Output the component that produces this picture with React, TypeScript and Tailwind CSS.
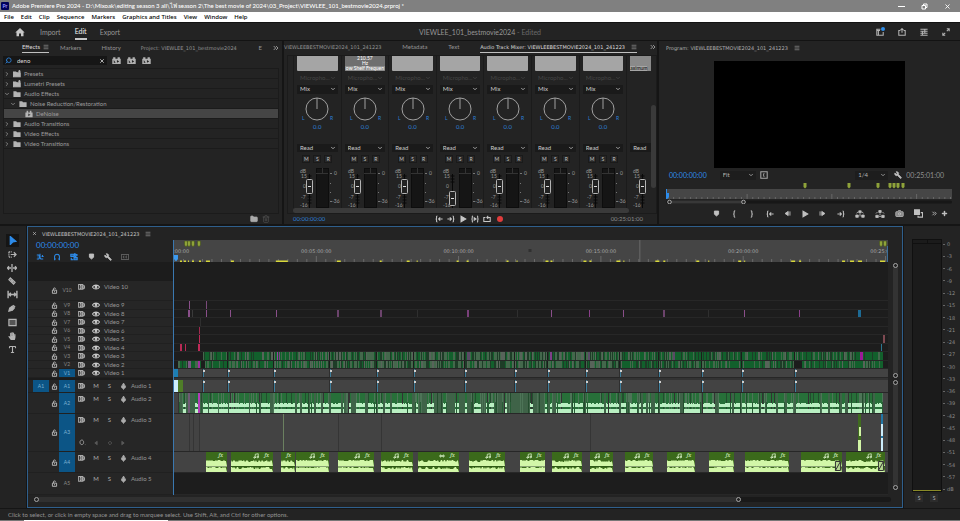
import type { ReactNode } from 'react';
import { Mic, Music, ChevronDown, ChevronRight, ChevronsRight, Menu, Search, X, Wrench, Folder, Trash2, Camera, Plus, Type } from 'lucide-react';
import { FaHandPaper } from 'react-icons/fa';

const SEQUENCE = 'VIEWLEEBESTMOVIE2024_101_241223';

// Timeline canvas units: one unit is 2.1 seconds of the sequence
const CANVAS = 715;

function random(seed: number) {
  let s = seed;
  return () => {
    s = (s * 16807) % 2147483647;
    return s / 2147483647;
  };
}

/* ---------- icons ---------- */

const glyphs: Record<string, ReactNode> = {
  goIn: <path d="M3 1.2c-1.4 0-1 1.4-1 2.4S1.6 5 .8 5c.8 0 1.2.4 1.2 1.4s-.4 2.4 1 2.4M9.5 5H4.5M6.5 3 4.5 5l2 2" />,
  goOut: <path d="M7 1.2c1.4 0 1 1.4 1 2.4S8.400 5 9.200 5C8.400 5 8 5.400 8 6.400s.4 2.400-1 2.400M.5 5h5M3.500 3l2 2-2 2" />,
  play: <path d="M2.500 1.500v7l6-3.500z" fill="currentColor" />,
  playInOut: <path d="M2.500 1.200c-1.200 0-.9 1.400-.9 2.400S1.200 5 .5 5c.7 0 1.100.4 1.100 1.400s-.3 2.400.9 2.400M7.500 1.200c1.200 0 .9 1.400.9 2.400S8.800 5 9.500 5c-.7 0-1.100.4-1.100 1.400s.3 2.400-.9 2.400M4 3.500v3L6.300 5z" />,
  loop: <path d="M3 3H1v5h8V3H5M6.500 1.200 4.800 3l1.700 1.700" />,
  braceOpen: <path d="M6.500 1C4.700 1 5.200 2.600 5.200 3.600S4.700 5 4 5c.7 0 1.200.4 1.200 1.400S4.700 9 6.500 9" />,
  braceClose: <path d="M3.500 1c1.800 0 1.300 1.600 1.300 2.600S5.300 5 6 5c-.7 0-1.200.4-1.200 1.400S5.300 9 3.500 9" />,
  marker: <path d="M2 1.500h6v4.500L5 8.500 2 6z" fill="currentColor" />,
  stepBack: <path d="M6 2v6L1.500 5zM8.500 2v6" fill="currentColor" />,
  stepForward: <path d="M4 2v6l4.500-3zM1.500 2v6" fill="currentColor" />,
  lift: <path d="M.8 6h2.500v2.300H.8zM6.700 6h2.500v2.300H6.700zM3.800 1.800h2.400v2H3.800zM5 4.500v3M1.500 4.200 3 3M8.500 4.200 7 3" fill="currentColor" strokeWidth=".8" />,
  extract: <path d="M.8 6.300h2.500v2.200H.8zM6.700 6.300h2.500v2.200H6.700zM3.800 1.500h2.400v2H3.800zM4 7.400h2M5 4.300v2M1 4.500 2.500 3M9 4.500 7.500 3" fill="currentColor" strokeWidth=".8" />,
  compare: <><path d="M.5 1h5.500v5H.5z" fill="currentColor" /><path d="M7.500 4h2v5h-5V7.500" /></>,
  lock: <path d="M2 4.500h6V9H2zM3.500 4.500V2.500c0-1.500 3-1.500 3 0M5 6v1.500" />,
  sync: <path d="M.8 1.800h5v6h-5zM2.500 3.300h2M2.500 5h6M2.500 6.500h2M6 2.500c3 0 3 5 0 5" />,
  eye: <path d="M.5 5C2.500 1.500 7.500 1.500 9.500 5 7.500 8.500 2.500 8.500.5 5zM5 3.900a1.100 1.100 0 1 0 0 2.200 1.100 1.100 0 0 0 0-2.200z" />,
  keyframe: <path d="M4 1.500C.5 1.500.5 8 4 8s3.500-6.500 0-6.500zM8.500 8h.5" />,
  prevKey: <path d="M7 2v6L3 5z" fill="currentColor" />,
  nextKey: <path d="M3 2v6l4-3z" fill="currentColor" />,
  diamond: <path d="M5 2 8 5 5 8 2 5z" />,
  select: <path d="M2.500.5 9 6 5.500 6.500 2.500 9.500z" fill="currentColor" />,
  trackSelect: <><path d="M1 2h4M1 8h4M1 2v6" strokeDasharray="1.200 .8" /><path d="M3 5h6M6.500 2.500 9 5 6.500 7.500" /></>,
  ripple: <path d="M5 1v8M.5 5H4M6 5h3.500M2 3.300.5 5 2 6.700M8 3.300 9.500 5 8 6.700" />,
  razor: <path d="M3 1 9 6.500 7 9 1 3.500zM4 4l2 2" fill="currentColor" fillOpacity=".7" />,
  slip: <path d="M1 1.500v7M9 1.500v7M2 5h6M3.500 3.500 2 5l1.500 1.500M6.500 3.500 8 5 6.500 6.500" />,
  pen: <path d="M1 9l1-4 3.500-2.500L8 5 5.500 8zM6.500 1.500 9 4" fill="currentColor" />,
  rect: <path d="M1 1.500h8v7H1z" fill="currentColor" fillOpacity=".35" />,
  nest: <path d="M1 2.500h2.500L6 7.500h3M1 7.500h2.500l2-4M5 1v2M8 2.500v2M2.500 4.500v1M7 4.500h2.500" />,
  magnet: <path d="M2 9V4.500c0-4 6-4 6 0V9M1.500 7.500h2M6.500 7.500h2" />,
  linked: <path d="M1 1.500h4v3H1zM5 5.500h4v3H5zM6 1l3 1.500L6.500 5zM1.500 6v2.500H4" fill="currentColor" fillOpacity=".6" />,
  captions: <path d="M.5 2h9v6h-9zM4.200 4C2.400 3.400 2.400 6.600 4.200 6M7.500 4C5.700 3.400 5.700 6.600 7.500 6" />,
  workspace: <path d="M9 5v4H1V1.500h4.500M1 3h4M3 3v6" />,
  share: <path d="M3 3H1v6h8V3H7M5 6V.8M3.200 2.400 5 .8l1.800 1.600" />,
  quick: <path d="M.5 1.500h9M.5 4h9M.5 6.500h9M.5 9h9M6 1v6M3 3.500v5" />,
  fullscreen: <path d="M6 1h3v3M9 1 6 4M4 9H1V6M1 9l3-3" />,
  home: <path d="M.3 5.500 5 1l4.700 4.500H8.500V9.300H6V6.500H4v2.800H1.500V5.500z" fill="currentColor" stroke="none" />,
  preset: <path d="M.5 2.500h3l1 1h4.500v5H.5zM8 0v3M6.500 1.500h3" fill="currentColor" />,
  folder: <path d="M.5 1.500h3.500l1 1.200h4.500v6h-9z" fill="currentColor" stroke="none" />,
  accel: <path fillRule="evenodd" d="M.3 3h1V1.500h2.500V3h2.400V1.500h2.500V3h1v6H.3zM2 4.500v3h2M5.500 4.500v3l2.500-1.500z" fill="currentColor" stroke="none" />,
  effect: <path fillRule="evenodd" d="M.5 3H2V1h2v2h2V1h2v2h1.500v6h-9zM4 4.500v3.200L7 6z" fill="currentColor" stroke="none" />,
  square: <path d="M1 1h8v8H1zM5.500 3C4.200 3 4.800 5 4 5c.8 0 .2 2 1.500 2" />,
  wave: <path d="M1 4v2M2.600 2.500v5M4.200 3.500v3M5.800 3.500v3M7.400 2.500v5M9 4v2" />,
};

function Icon({ name, className = 'size-2' }: { name: string; className?: string }) {
  return (
    <svg viewBox="0 0 10 10" className={`shrink-0 ${className}`} fill="none" stroke="currentColor" strokeWidth="1.3" aria-hidden="true">
      {glyphs[name]}
    </svg>
  );
}

function IconButton({ name, label, className = '', icon }: { name: string; label: string; className?: string; icon?: string }) {
  return (
    <button aria-label={label} className={`flex shrink-0 items-center justify-center ${className}`}>
      <Icon name={name} className={icon} />
    </button>
  );
}

function PanelMenu() {
  return (
    <button aria-label="Panel menu" className="text-[#8a8a8a]">
      <Menu className="size-1.5" strokeWidth={3} />
    </button>
  );
}

/* ---------- window chrome ---------- */

function TitleBar() {
  return (
    <div className="flex h-3 items-center bg-[#808080] text-[6px] font-medium text-white">
      <span className="ml-px flex size-2 items-center justify-center rounded-[1px] bg-[#00005b] text-[5px] font-bold text-[#9999ff]">Pr</span>
      <span className="ml-[3px] whitespace-nowrap">
        Adobe Premiere Pro 2024 - D:\Mixoak\editing season 3 all\ไฟ season 2\The best movie of 2024\03_Project\VIEWLEE_101_bestmovie2024.prproj *
      </span>
      <div className="ml-auto flex gap-4 pr-[9px]">
        <button aria-label="Minimize" className="flex size-[7px] items-center"><span className="h-px w-full bg-white" /></button>
        <button aria-label="Restore" className="size-[7px]">
          <svg viewBox="0 0 7 7" className="size-full" fill="none" stroke="white"><path d="M1 2.500h3.500V6H1zM2.500 2.500V1H6v3.500H4.500" /></svg>
        </button>
        <button aria-label="Close"><X className="size-[7px]" strokeWidth={3} /></button>
      </div>
    </div>
  );
}

const menus = ['File', 'Edit', 'Clip', 'Sequence', 'Markers', 'Graphics and Titles', 'View', 'Window', 'Help'];

function MenuBar() {
  return (
    <nav className="flex h-[10px] items-center gap-[7px] bg-white pl-1 font-['Noto_Sans',sans-serif] text-[6px] font-medium text-black">
      {menus.map((m) => <button key={m}>{m}</button>)}
    </nav>
  );
}

function Header() {
  return (
    <header className="grid h-[19px] grid-cols-3 items-center border-y border-[#131313] bg-[#232323] text-[7px] text-[#969696]">
      <div className="flex h-full items-center pl-[15px]">
        <IconButton name="home" label="Home" className="text-[#c8c8c8]" icon="size-[10px]" />
        <button className="ml-[15px]">Import</button>
        <button className="ml-[14px] h-full border-b-2 border-[#c8c8c8] text-[#f0f0f0]">Edit</button>
        <button className="ml-[13px]">Export</button>
      </div>
      <div className="whitespace-nowrap text-center">
        VIEWLEE_101_bestmovie2024 <span className="text-[#6a6a6a]">- Edited</span>
      </div>
      <div className="flex justify-end gap-[14px] pr-[10px] text-[#b4b4b4]">
        <span className="relative flex">
          <IconButton name="workspace" label="Workspaces" />
          <span className="absolute -right-px -top-px size-1 rounded-full bg-[#2f8eea]" />
        </span>
        <IconButton name="share" label="Quick export" />
        <IconButton name="quick" label="Progress" />
        <IconButton name="fullscreen" label="Full screen" />
      </div>
    </header>
  );
}

/* ---------- effects panel ---------- */

const effects = [
  { name: 'Presets', icon: 'preset', depth: 'pl-0', open: false },
  { name: 'Lumetri Presets', icon: 'preset', depth: 'pl-0', open: false },
  { name: 'Audio Effects', icon: 'folder', depth: 'pl-0', open: true },
  { name: 'Noise Reduction/Restoration', icon: 'folder', depth: 'pl-1.5', open: true },
  { name: 'DeNoise', icon: 'effect', depth: 'pl-3', open: null },
  { name: 'Audio Transitions', icon: 'folder', depth: 'pl-0', open: false },
  { name: 'Video Effects', icon: 'folder', depth: 'pl-0', open: false },
  { name: 'Video Transitions', icon: 'folder', depth: 'pl-0', open: false },
];

function EffectsPanel() {
  return (
    <section className="flex w-[282px] shrink-0 flex-col bg-[#232323] pb-[1px]">
      <div className="flex h-[13px] items-center whitespace-nowrap pl-[22px] text-[#949494]">
        <div className="flex h-[11px] w-[27px] items-center justify-between border-b border-[#c0c0c0]">
          <button className="text-[#dcdcdc]">Effects</button>
          <PanelMenu />
        </div>
        <button className="ml-[11px]">Markers</button>
        <button className="ml-[20px]">History</button>
        <button className="ml-[20px] font-['DejaVu_Sans',sans-serif] text-[5px]">Project: VIEWLEE_101_bestmovie2024</button>
        <span className="ml-auto">E</span>
        <button aria-label="More tabs" className="ml-2.5 mr-0.5"><ChevronsRight className="size-2" strokeWidth={3} /></button>
      </div>
      <div className="mt-px flex h-[11px] items-center pl-[3px]">
        <label className="flex h-[9px] w-[104px] items-center bg-[#161616] px-0.5">
          <Search className="size-[7px] -scale-x-100 text-[#2d7fd3]" strokeWidth={3} />
          <input aria-label="Search effects" defaultValue="deno" className="ml-[5px] min-w-0 flex-1 bg-transparent text-[#dcdcdc] outline-none" />
          <button aria-label="Clear search"><X className="size-1.5 text-[#ddd]" strokeWidth={3} /></button>
        </label>
        <div className="ml-[5px] flex gap-1.5 text-[#b0b0b0]">
          <IconButton name="accel" label="Accelerated effects" icon="size-[9px]" />
          <IconButton name="accel" label="32-bit effects" icon="size-[9px]" />
          <IconButton name="accel" label="YUV effects" icon="size-[9px]" />
        </div>
      </div>
      <div className="mx-[3px] mt-[2px] flex-1 border border-[#1b1b1b]">
        {effects.map((e) => (
          <div key={e.name} className={`h-[10px] border-b border-[#1b1b1b] ${e.open === null ? 'bg-[#454545]' : ''}`}>
            <button className={`flex h-full items-center text-[#9c9c9c] ${e.depth}`}>
              <span className="flex w-[9px] items-center">
                {e.open === true && <ChevronDown className="size-1.5" strokeWidth={3} />}
                {e.open === false && <ChevronRight className="size-1.5" strokeWidth={3} />}
              </span>
              <Icon name={e.icon} className="size-[8px] text-[#b4b4b4]" />
              <span className="ml-[3px]">{e.name}</span>
            </button>
          </div>
        ))}
      </div>
      <div className="flex h-[9px] items-center justify-end gap-1 pr-3">
        <button aria-label="New bin"><Folder className="size-2 fill-current text-[#aaa]" /></button>
        <button aria-label="Delete"><Trash2 className="size-2 text-[#555]" /></button>
      </div>
    </section>
  );
}

/* ---------- audio track mixer ---------- */

function MiniSelect({ label, value, className = '' }: { label: string; value: string; className?: string }) {
  return (
    <div className={`relative flex items-center ${className}`}>
      <select aria-label={label} className="h-full w-full appearance-none pl-[3px] outline-none">
        <option>{value}</option>
      </select>
      <ChevronDown className="pointer-events-none absolute right-0.5 size-[6px]" strokeWidth={3} />
    </div>
  );
}

const strips = [
  { low: false, plot: 'plain' },
  { low: false, plot: 'shelf' },
  { low: false, plot: 'plain' },
  { low: true, plot: 'plain' },
  { low: false, plot: 'plain' },
  { low: false, plot: 'plain' },
  { low: false, plot: 'plain' },
];

function Fader({ low = false }: { low?: boolean }) {
  return (
    <>
      <text x="3" y="6">dB</text>
      <text x="4" y="11">15</text>
      <text x="6" y="21">0</text>
      <text x="4" y="32">-7</text>
      <text x="3" y="40">-16</text>
      <path d="M10.500 9h4M10.500 12h4M10.500 15h4M10.500 27h4M10.500 30h4M10.500 33h4M10.500 36h4M12.500 7v34" stroke="#080808" />
      <rect x="9.500" y={low ? 24.500 : 12.500} width="6" height="14" rx="1" fill="#222" stroke="#b4b4b4" />
      <path d={low ? 'M11 31.500h3' : 'M11 19.500h3'} stroke="#ddd" />
    </>
  );
}

function Strip({ low, plot, index }: { low: boolean; plot: string; index: number }) {
  return (
    <div className="flex w-[13.300%] shrink-0 flex-col border-l border-[#1b1b1b] px-[3px]">
      <div className={`flex h-[15px] flex-col items-center justify-end overflow-hidden rounded-b-[1px] text-[5px] leading-[5px] ${plot === 'plain' ? 'bg-[#a5a5a5]' : 'bg-[#6f6f6f] text-white'}`}>
        {plot === 'shelf' && <><span>210.57</span><span>Hz</span><span className="flex w-full justify-center whitespace-nowrap bg-[#8c8c8c]">ow Shelf Frequen</span></>}
      </div>
      <MiniSelect label={`Input ${index}`} value="Micropho..." className="mt-[3px] h-[9px] text-[#464646]" />
      <MiniSelect label={`Output ${index}`} value="Mix" className="mt-[2px] h-[9px] bg-[#1a1a1a] text-[#cacaca]" />
      <svg viewBox="0 0 40 26" className="mx-auto mt-[3px] h-[26px] w-10 shrink-0" role="img" aria-label="Pan 0.0">
        <circle cx="20" cy="12" r="11" fill="none" stroke="#a0a0a0" />
        <path d="M20 1v11" stroke="#a0a0a0" />
        <text x="5" y="23" fontSize="5" fill="#2d7fd3">L</text>
        <text x="33" y="23" fontSize="5" fill="#2d7fd3">R</text>
      </svg>
      <button className="h-[7px] text-center leading-[7px] text-[#2d7fd3]">0.0</button>
      <MiniSelect label={`Automation ${index}`} value="Read" className="mt-[14px] h-[9px] bg-[#1a1a1a] text-[#cacaca]" />
      <div className="mt-[3px] flex justify-center gap-[3px] text-[5px] text-[#c0c0c0]">
        {['M', 'S', 'R'].map((b) => <button key={b} className="size-2 border border-[#1a1a1a] bg-[#282828] leading-[6px]">{b}</button>)}
      </div>
      <svg viewBox="0 0 40 41" className="mt-[4px] h-[41px] w-10 shrink-0 overflow-visible" fill="#9a9a9a" fontSize="5" aria-hidden="true">
        <Fader low={low} />
        <rect x="19.500" y="1.500" width="12" height="39" fill="#151515" stroke="#0d0d0d" />
        <path d="M19 6.500h12M25.500 1v5" stroke="#333" />
        <path d="M33 6.500h2M33 16.500h1M33 25.500h1M33 34.500h2" stroke="#777" />
        <text x="37" y="8">0</text>
        <text x="35" y="36">-36</text>
      </svg>
    </div>
  );
}

function PartialStrip() {
  return (
    <div className="flex min-w-0 flex-1 flex-col border-l border-[#1b1b1b] pl-[3px]">
      <div className="flex h-[15px] items-end bg-[#8a8a8a] text-[5px] leading-[5px] text-black">
        <span className="bg-[#a5a5a5]">aximum</span>
      </div>
      <div className="mt-[72px] flex h-[9px] items-center bg-[#1a1a1a] pl-[3px] text-[#cacaca]">
        <button>Read</button>
      </div>
      <svg viewBox="0 0 20 41" className="mt-[15px] h-[41px] w-5 shrink-0" fill="#9a9a9a" fontSize="5" aria-hidden="true">
        <Fader />
      </svg>
    </div>
  );
}

function MixerPanel() {
  return (
    <section className="flex min-w-0 flex-1 flex-col bg-[#232323]">
      <div className="flex h-[13px] items-center whitespace-nowrap text-[#949494]">
        <button className="font-['DejaVu_Sans',sans-serif] text-[5px]">{SEQUENCE}</button>
        <button className="ml-auto">Metadata</button>
        <button className="ml-auto">Text</button>
        <div className="ml-auto flex h-[11px] items-center gap-1.5 border-b border-[#c0c0c0]">
          <button className="font-['DejaVu_Sans',sans-serif] text-[5px] text-[#dcdcdc]">Audio Track Mixer: {SEQUENCE}</button>
          <PanelMenu />
        </div>
        <button aria-label="More tabs" className="ml-3"><ChevronsRight className="size-2" strokeWidth={3} /></button>
      </div>
      <div className="ml-[3px] mt-[2px] flex flex-1 border border-[#1b1b1b] pl-[5px]">
        <div className="flex min-w-0 flex-1 flex-col">
          <div className="flex h-[152px] overflow-hidden">
            {strips.map((s, i) => <Strip key={i} index={i + 1} {...s} />)}
            <PartialStrip />
          </div>
          <div className="mr-[22px] h-[5px] rounded-full bg-[#3a3a3a]" />
        </div>
        <div className="w-[5px]">
          <div className="mt-[49px] h-[83px] rounded-full bg-[#3a3a3a]" />
        </div>
      </div>
      <div className="grid h-[10px] grid-cols-3 items-center pl-[9px] pr-[14px]">
        <span className="text-[#2d7fd3]">00:00:00:00</span>
        <div className="ml-[3px] flex justify-center gap-1 text-[#c8c8c8]">
          <IconButton name="goIn" label="Go to in" />
          <IconButton name="goOut" label="Go to out" />
          <IconButton name="play" label="Play" />
          <IconButton name="playInOut" label="Play in to out" />
          <IconButton name="loop" label="Loop" />
          <button aria-label="Record" className="ml-[2px] size-[6px] self-center rounded-full bg-[#e03c3c]" />
        </div>
        <span className="text-right text-[#8a8a8a]">00:25:01:00</span>
      </div>
    </section>
  );
}

/* ---------- program monitor ---------- */

const programMarkers = [139, 183, 212, 224, 228, 232, 237];

function ProgramPanel() {
  return (
    <section className="flex w-[301px] shrink-0 flex-col bg-[#232323] pl-[7px] pr-2">
      <div className="flex h-[13px] items-center gap-1.5 font-['DejaVu_Sans',sans-serif] text-[5px] text-[#b0b0b0]">
        <span>Program: {SEQUENCE}</span>
        <PanelMenu />
      </div>
      <div className="mx-auto mt-[7px] h-[107px] w-[191px] bg-black" />
      <div className="mt-[2px] flex h-[10px] items-center text-[7px]">
        <span className="ml-[3px] text-[#2d8ceb]">00:00:00:00</span>
        <MiniSelect label="Zoom level" value="Fit" className="ml-[13px] h-[9px] w-9 bg-[#1d1d1d] text-[6px] text-[#b4b4b4]" />
        <IconButton name="square" label="Safe margins" className="ml-1 text-[#a8a8a8]" icon="size-2" />
        <MiniSelect label="Playback resolution" value="1/4" className="ml-auto h-[9px] w-[33px] bg-[#1d1d1d] text-[6px] text-[#b4b4b4]" />
        <button aria-label="Settings" className="ml-[6px] text-[#c0c0c0]"><Wrench className="size-2 -scale-x-100 fill-current" /></button>
        <span className="ml-1 mr-[8px] text-[#909090]">00:25:01:00</span>
      </div>
      <svg viewBox="0 0 286 24" preserveAspectRatio="none" className="h-[24px] w-full shrink-0" role="img" aria-label="Program time ruler">
        {programMarkers.map((x) => <path key={x} d={`M${x - 1.500} 3h3v4l-1.500 1.500-1.500-1.500z`} fill="#8fa33a" />)}
        <rect y="9" width="286" height="10" fill="#464646" />
        {Array.from({ length: 51 }, (_, i) => (
          <path key={i} d={`M${i * 5.650 + 2} 19v${(i + 1) % 15 === 0 ? -5 : -2}`} stroke="#777" strokeWidth=".7" />
        ))}
        <path d="M.5 9v10" stroke="#2d8ceb" />
        <path d="M0 13h3v4l-1.500 2L0 17z" fill="#2d8ceb" />
        <rect y="20.500" width="286" height="3" rx="1.500" fill="#171717" />
        <rect x="3" y="20.500" width="74" height="3" fill="#383838" />
        <circle cx="3.500" cy="22" r="1.800" fill="#222" stroke="#aaa" />
        <circle cx="77.500" cy="22" r="1.800" fill="#222" stroke="#aaa" />
      </svg>
      <div className="flex h-[19px] items-center text-[#c0c0c0]">
        <div className="ml-[47px] flex flex-1 items-center justify-between">
          <IconButton name="marker" label="Add marker" icon="size-[7px]" />
          <IconButton name="braceOpen" label="Mark in" />
          <IconButton name="braceClose" label="Mark out" />
          <IconButton name="goIn" label="Go to in" />
          <IconButton name="stepBack" label="Step back" icon="size-[7px]" />
          <IconButton name="play" label="Play" />
          <IconButton name="stepForward" label="Step forward" icon="size-[7px]" />
          <IconButton name="goOut" label="Go to out" />
          <IconButton name="lift" label="Lift" icon="size-[10px]" />
          <IconButton name="extract" label="Extract" icon="size-[10px]" />
          <button aria-label="Export frame"><Camera className="size-[9px] fill-[#888]" /></button>
          <IconButton name="compare" label="Comparison view" icon="size-[9px]" />
        </div>
        <button aria-label="More buttons" className="ml-2"><ChevronsRight className="size-[7px]" strokeWidth={3} /></button>
        <button aria-label="Button editor" className="ml-[3px] mr-1"><Plus className="size-[7px]" strokeWidth={5} /></button>
      </div>
    </section>
  );
}

/* ---------- timeline ---------- */

type Clip = [x: number, width: number, color: string];

interface Track {
  id: string;
  label: string;
  height: string;
  units: number;
  targeted?: boolean;
  filled?: boolean;
}

const videoTracks: Track[] = [
  { id: 'V10', label: 'Video 10', height: 'h-[20px]', units: 20 },
  { id: 'V9', label: 'Video 9', height: 'h-[9px]', units: 9 },
  { id: 'V8', label: 'Video 8', height: 'h-[8px]', units: 8 },
  { id: 'V7', label: 'Video 7', height: 'h-[9px]', units: 9 },
  { id: 'V6', label: 'Video 6', height: 'h-[8px]', units: 8 },
  { id: 'V5', label: 'Video 5', height: 'h-[9px]', units: 9 },
  { id: 'V4', label: 'Video 4', height: 'h-[8px]', units: 8 },
  { id: 'V3', label: 'Video 3', height: 'h-[9px]', units: 9 },
  { id: 'V2', label: 'Video 2', height: 'h-[8px]', units: 8 },
  { id: 'V1', label: 'Video 1', height: 'h-[9px]', units: 9, targeted: true, filled: true },
];

const audioTracks: Track[] = [
  { id: 'A1', label: 'Audio 1', height: 'h-[13px]', units: 13, targeted: true, filled: true },
  { id: 'A2', label: 'Audio 2', height: 'h-[21px]', units: 21, targeted: true, filled: true },
  { id: 'A3', label: 'Audio 3', height: 'h-[38px]', units: 38, targeted: true, filled: true },
  { id: 'A4', label: 'Audio 4', height: 'h-[21px]', units: 21, targeted: true, filled: true },
  { id: 'A5', label: 'Audio 5', height: 'h-[22px]', units: 22 },
];

const cuts = [29, 54, 100, 156, 203, 240, 291, 341, 375, 413, 447, 486, 529, 569, 622];

const sparse: Record<string, Clip[]> = {
  V9: [[15, 1, '#8a4f8a'], [32, 1, '#7a4a7a']],
  V8: [[14, 2, '#8a4f8a'], [18, 1, '#3a3a3a'], [32, 1, '#8a4f8a'], [56, 1, '#8a4f8a'], [102, 1, '#8a4f8a'], [163, 2, '#6b436b'], [206, 2, '#6b436b'], [243, 1, '#2f2f2f'], [293, 2, '#7a407a'], [343, 1, '#2f2f2f'], [378, 1, '#8a4f8a'], [416, 1, '#8a3f8a'], [450, 1, '#8a4f8a'], [490, 2, '#6b436b'], [535, 1, '#2f2f2f'], [571, 1, '#8a4f8a'], [626, 1, '#8a3f8a'], [685, 3, '#1d6a94']],
  V7: [[26, 1, '#2f2f2f']],
  V6: [[25, 1, '#a02a50']],
  V5: [[25, 1, '#c02a58'], [710, 2, '#7f4a52']],
  V4: [[6, 2, '#b82a55'], [11, 1, '#b82a55'], [24, 2, '#c02a58'], [708, 1, '#2a7590']],
};

// Cut-down footage: a green run broken by thin slivers, denser in the middle of the episode
function footage(seed: number, from: number): Clip[] {
  const next = random(seed);
  const clips: Clip[] = [[from, 710 - from, '#12602c']];
  for (let x = from; x < 709; x++) {
    const busy = x > 150 && x < 450;
    const r = next();
    const limit = busy ? 0.74 : 0.46;
    if (r > limit) continue;
    const t = r / limit;
    clips.push([x, 1, t < 0.5 ? '#44684c' : t < 0.68 ? '#58645a' : '#1d3d27']);
  }
  cuts.forEach((c) => clips.push([c - 1, 1, '#1c1c1c']));
  return clips;
}

const dense: Record<string, Clip[]> = {
  V3: [...footage(71, 29), [103, 1, '#9c3fa5'], [105, 1, '#7d3f85'], [293, 3, '#5a4a66'], [377, 2, '#80408a'], [415, 2, '#5a4a66'], [500, 2, '#5a4a66'], [687, 3, '#9c1a98']],
  V2: [...footage(913, 4), [14, 3, '#7d5585'], [24, 2, '#a030a0'], [27, 4, '#1c1c1c'], [622, 7, '#1c1c1c']],
};

// Stretches of dialogue on Audio 2
const speech = [
  [9, 12], [21, 26], [29, 34], [35, 44], [45, 54], [55, 75], [76, 85], [87, 96], [100, 121], [123, 126], [128, 134], [136, 140], [142, 147],
  [149, 155], [157, 167], [169, 170], [175, 177], [182, 191], [194, 202], [204, 209], [211, 216], [218, 238], [241, 244],
  [253, 260], [269, 273], [281, 285], [291, 293], [300, 307], [312, 320], [331, 333], [356, 360], [372, 374], [377, 379],
  [383, 398], [400, 411], [413, 431], [433, 435], [436, 446], [448, 453], [457, 464], [466, 468], [470, 473], [475, 478],
  [482, 485], [487, 507], [511, 528], [530, 542], [546, 559], [561, 567], [569, 586], [588, 592], [594, 603], [605, 612],
  [614, 620], [623, 647], [649, 655], [657, 667], [669, 672], [675, 678], [679, 689], [691, 700], [702, 710],
];

function DialogueLane() {
  const next = random(4242);
  const stripes = Array.from({ length: 230 }, () => [Math.floor(next() * 706) + 4, next()]);
  return (
    <>
      <rect x="4" width="706" height="21" fill="#3f6348" />
      {speech.map(([a, b]) => <rect key={a} x={a} width={b - a} height="21" fill="#277039" />)}
      {stripes.map(([x, shade], i) => <rect key={i} x={x} width="1" height="21" fill={shade < 0.6 ? '#4d7457' : shade < 0.9 ? '#234d2e' : '#333'} />)}
      {speech.map(([a, b]) => {
        const n = b - a;
        const tops = Array.from({ length: n }, (_, i) => `L${a + i} ${10 + Math.floor(next() * 3)}L${a + i + 1} 11`).join('');
        return <path key={a} d={`M${a} 15${tops}L${b} 15zM${a} 17h${n}v4h-${n}z`} fill="#b9efc2" />;
      })}
      {stripes.slice(0, 40).map(([x], i) => <rect key={i} x={x} y="9" width="1" height="12" fill="#285c36" />)}
      <rect x="14" width="2" height="21" fill="#6f5a75" />
      <rect x="24" width="2" height="21" fill="#b23fb8" />
    </>
  );
}

function LaneContent({ track }: { track: Track }) {
  const clips = sparse[track.id] ?? dense[track.id] ?? [];
  return (
    <svg viewBox={`0 0 ${CANVAS} ${track.units}`} preserveAspectRatio="none" className="block h-full w-full" shapeRendering="crispEdges" aria-hidden="true">
      {clips.map(([x, w, color], i) => <rect key={i} x={x} width={w} height={track.units} fill={color} />)}
      {track.id === 'V1' || track.id === 'A1' ? (
        <>
          <rect width="4" height={track.units} fill={track.id === 'V1' ? '#1c7fb4' : '#cdeefc'} />
          {track.id === 'A1' && <rect x="4" width="5" height="13" fill="#4f7d28" />}
          {cuts.map((x) => (
            <g key={x}>
              <rect x={x - 1} width="1" height={track.units} fill="#2e2e2e" />
              <rect x={x} width="1" height={track.units} fill="#3e7e9c" />
              <rect x={x} y="1" width="2" height="2" fill="#d0d0d0" />
            </g>
          ))}
        </>
      ) : null}
      {track.id === 'A2' && <DialogueLane />}
      {track.id === 'A3' && (
        <>
          {[15, 19, 25, 164, 207, 417].map((x) => <rect key={x} x={x} width="1" height="38" fill="#353535" />)}
          <rect x="109" width="1" height="38" fill="#6b8060" />
          <rect x="685" width="3" height="38" fill="#3f6b1f" />
          <path d="M686 13h2v10h-2zM685 27h3v11h-3z" fill="#d2f5a6" />
          <rect x="708" width="2" height="38" fill="#2277a6" />
          <path d="M708 10h2v13h-2zM708 25h2v13h-2z" fill="#cdeefc" />
        </>
      )}
    </svg>
  );
}

const music = [
  { x: 32, w: 21, kind: 'fx' }, { x: 57, w: 42, kind: 'note' }, { x: 107, w: 14, kind: 'fx' }, { x: 122, w: 33, kind: 'note' },
  { x: 164, w: 36, kind: 'note' }, { x: 207, w: 32, kind: 'note' }, { x: 244, w: 41, kind: 'wave' }, { x: 295, w: 36, kind: 'note' },
  { x: 346, w: 26, kind: 'note' }, { x: 379, w: 30, kind: 'note' }, { x: 417, w: 23, kind: 'note' }, { x: 452, w: 28, kind: 'note' },
  { x: 494, w: 28, kind: 'note' }, { x: 536, w: 25, kind: 'fx' }, { x: 572, w: 44, kind: 'note' }, { x: 628, w: 41, kind: 'note' },
  { x: 673, w: 39, kind: 'note' },
];

// Clips that end in a cross-fade
const fades = [628, 673];

function MusicClip({ x, w, kind }: { x: number; w: number; kind: string }) {
  const next = random(x * 97 + 5);
  const rough = x % 2 === 1 || kind === 'wave' ? 3 : 2;
  const edge = (base: number) => Array.from({ length: w }, (_, i) => `L${i} ${base + Math.floor(next() * rough)}`).join('');
  return (
    <div className="absolute inset-y-0 overflow-hidden bg-[#3b6a1b]" style={{ left: `${(x / CANVAS) * 100}%`, width: `${(w / CANVAS) * 100}%` }}>
      <div className="flex h-2 items-center justify-end gap-[5px] pr-[4px] text-[#dff5cf]">
        {kind === 'note' && <Music className="size-[6px]" strokeWidth={3} />}
        {kind === 'wave' && <Icon name="wave" className="size-[6px]" />}
        <i className="font-serif text-[6px] leading-[8px]">fx</i>
      </div>
      <svg viewBox={`0 0 ${w} 12`} preserveAspectRatio="none" className="block h-3 w-full" aria-hidden="true">
        <path d={`M0 6${edge(0)}L${w} 6zM0 12${edge(7)}L${w} 12z`} fill="#d2f7a8" />
        <path d={`M0 6.500h${w}`} stroke={rough === 3 ? '#2f5a16' : '#8aa572'} />
        {fades.includes(x) && <path d={`M${w - 6.500} 1.500h5v9h-5zM${w - 6.500} 10.500l5-9`} fill="#b6d992" stroke="#333" />}
      </svg>
    </div>
  );
}

function TrackHeader({ track, video }: { track: Track; video: boolean }) {
  return (
    <div className={`flex items-center border-b border-[#202020] text-[#acacac] ${track.height}`}>
      <span className="w-[5px]" />
      {track.id === 'A1' ? (
        <button className="h-full w-4 bg-[#0c5586] text-[5px] text-[#7fb2d2]">A1</button>
      ) : <span className="w-4" />}
      <IconButton name="lock" label={`Lock ${track.label}`} className="w-[10px] text-[#c0c0c0]" icon="size-[7px]" />
      <button className={`h-full w-4 text-[5px] leading-[5px] ${track.targeted ? 'bg-[#0c5586] text-[#7fb2d2]' : 'text-[#8a8a8a]'}`}>{track.id}</button>
      <div className="h-full flex-1">
        <div className="flex h-full max-h-3 items-center">
          <IconButton name="sync" label={`Sync lock ${track.label}`} className="w-[14px]" icon="size-[8px]" />
          {video ? (
            <IconButton name="eye" label={`Toggle ${track.label}`} className="w-[14px] text-[#c8c8c8]" icon="size-[8px]" />
          ) : (
            <>
              <button className="w-[14px]">M</button>
              <button className="w-[13px]">S</button>
              <button aria-label={`Record ${track.label}`} className="flex w-[14px] justify-center"><Mic className="size-[7px] fill-current" strokeWidth={3} /></button>
            </>
          )}
          <span className="ml-px whitespace-nowrap leading-[8px] text-[#989898]">{track.label}</span>
        </div>
        {track.id === 'A3' && (
          <div className="mt-[13px] flex text-[#5a5a5a]">
            <IconButton name="keyframe" label="Show keyframes" className="w-[14px] text-[#a0a0a0]" icon="size-[7px]" />
            <IconButton name="prevKey" label="Previous keyframe" className="w-[14px]" icon="size-[6px]" />
            <IconButton name="diamond" label="Add keyframe" className="w-[13px]" icon="size-[6px]" />
            <IconButton name="nextKey" label="Next keyframe" className="w-[14px]" icon="size-[6px]" />
          </div>
        )}
      </div>
    </div>
  );
}

function Lane({ track }: { track: Track }) {
  return (
    <div className={`relative border-b border-[#272727] ${track.height} ${track.filled ? 'bg-[#434343]' : 'bg-[#1d1d1d]'}`}>
      {track.id === 'A4' ? music.map((m) => <MusicClip key={m.x} {...m} />) : <LaneContent track={track} />}
    </div>
  );
}

const renderBars = [[6, 2], [10, 2], [14, 1], [18, 2], [25, 2], [32, 4], [57, 3], [102, 12], [163, 4], [206, 2], [233, 3], [243, 1], [283, 2], [293, 2], [333, 2], [343, 1], [372, 3], [377, 2], [410, 3], [416, 2], [443, 4], [450, 1], [482, 4], [490, 2], [523, 3], [535, 1], [565, 3], [571, 1], [618, 4], [626, 2], [669, 3], [677, 4], [685, 4], [707, 5]];

function Ruler() {
  return (
    <svg viewBox="0 0 715 22" preserveAspectRatio="none" className="block h-[22px] w-full" fontSize="5" role="img" aria-label="Sequence time ruler">
      <rect width="715" height="22" fill="#454545" />
      {[12, 15, 19, 25, 708, 712].map((x) => <path key={x} d={`M${x - 1.500} 1h3v4l-1.500 2-1.500-2z`} fill="#8fa33a" stroke="#3c4a14" strokeWidth=".5" />)}
      {Array.from({ length: 76 }, (_, i) => (
        <path key={i} d={`M${i * 9.500} 22v${i % 15 === 0 ? -6 : -3}`} stroke="#747474" strokeWidth=".8" />
      ))}
      {['00:00:00:00', '00:05:00:00', '00:10:00:00', '00:15:00:00', '00:20:00:00', '00:25:01:00'].map((t, i) => (
        <text key={i} x={i * 142.500} y="13" textAnchor="middle" fill="#a8a8a8" className="font-['DejaVu_Sans',sans-serif]">{t}</text>
      ))}
      <path d="M466.500 0v22" stroke="#6a6a6a" />
      <rect x="355" y="9" width="3" height="3" fill="#303030" />
      {renderBars.map(([x, w]) => <rect key={x} x={x} y="20.500" width={w} height="1.500" fill="#d8d83a" />)}
      <path d="M0 15h4v4l-2 2.500-2-2.500z" fill="#3d9bf0" />
      <path d="M714.500 6v16" stroke="#3a6f9c" />
    </svg>
  );
}

function Knob({ className = '' }: { className?: string }) {
  return <span className={`size-[5px] shrink-0 rounded-full border border-[#a5a5a5] bg-[#222] ${className}`} />;
}

function Timeline() {
  return (
    <section className="flex min-w-0 flex-1 flex-col border border-[#2f5f8c] bg-[#232323]">
      <div className="flex h-[13px] items-center text-[5px] text-[#c4c4c4]">
        <button aria-label="Close sequence" className="ml-1"><X className="size-[5px]" strokeWidth={3} /></button>
        <span className="ml-[5px] mr-[5px] font-['DejaVu_Sans',sans-serif]">{SEQUENCE}</span>
        <PanelMenu />
      </div>
      <div className="flex">
        <div className="flex w-[146px] shrink-0 flex-col border-r border-[#3a78b0]">
          <div className="h-[22px] pl-2">
            <div className="text-[8px] leading-[11px] text-[#2d8ceb]">00:00:00:00</div>
            <div className="flex h-[11px] items-center gap-[9px] text-[#2d8ceb]">
              <IconButton name="nest" label="Insert as nest" />
              <IconButton name="magnet" label="Snap" />
              <IconButton name="linked" label="Linked selection" />
              <IconButton name="marker" label="Add marker" className="w-2 text-[#c0c0c0]" icon="size-[7px]" />
              <button aria-label="Timeline settings" className="text-[#c0c0c0]"><Wrench className="size-2 -scale-x-100 fill-current" /></button>
              <IconButton name="captions" label="Captions" className="text-[#5c5c5c]" />
            </div>
          </div>
          <div className="h-[19px] bg-[#1c1c1c]" />
          <div className="bg-[#262626]">
            {videoTracks.map((t) => <TrackHeader key={t.id} track={t} video />)}
            <div className="h-[2px] bg-[#1c1c1c]" />
            {audioTracks.map((t) => <TrackHeader key={t.id} track={t} video={false} />)}
          </div>
        </div>
        <div className="min-w-0 flex-1">
          <Ruler />
          <div className="h-[19px] bg-[#1d1d1d]" />
          {videoTracks.map((t) => <Lane key={t.id} track={t} />)}
          <div className="h-[2px] bg-[#333]" />
          {audioTracks.map((t) => <Lane key={t.id} track={t} />)}
        </div>
        <div className="flex w-[14px] flex-col items-center bg-[#232323] pt-[23px]">
          <div className="flex h-[115px] w-[5px] flex-col justify-between rounded-full bg-[#333]"><Knob /><Knob /></div>
          <div className="mt-[2px] flex h-[110px] w-[5px] flex-col justify-between rounded-full bg-[#333]"><Knob /><Knob /></div>
        </div>
      </div>
      <div className="ml-[6px] mr-[11px] mt-[2px] flex h-[5px] rounded-full bg-[#191919]">
        <div className="flex w-[82.500%] justify-between rounded-full bg-[#303030]"><Knob /><Knob /></div>
      </div>
    </section>
  );
}

function Tools() {
  return (
    <div className="flex w-[26px] shrink-0 flex-col items-center bg-[#232323] pt-2 pr-0.5 text-[#b4b4b4]">
      <IconButton name="select" label="Selection tool" className="h-[13px] w-[13px] bg-[#151515] text-[#2d8ceb]" icon="size-[9px]" />
      <IconButton name="trackSelect" label="Track select tool" className="h-[14px]" icon="size-[9px]" />
      <IconButton name="ripple" label="Ripple edit tool" className="h-[13px]" icon="size-[10px]" />
      <IconButton name="razor" label="Razor tool" className="h-[14px]" icon="size-[8px]" />
      <IconButton name="slip" label="Slip tool" className="h-[13px]" icon="size-[11px]" />
      <IconButton name="pen" label="Pen tool" className="h-[14px]" icon="size-[8px]" />
      <IconButton name="rect" label="Rectangle tool" className="h-[14px]" icon="size-[9px]" />
      <button aria-label="Hand tool" className="flex h-[13px] items-center"><FaHandPaper className="size-2" /></button>
      <button aria-label="Type tool" className="flex h-[14px] items-center"><Type className="size-[9px]" strokeWidth={3} /></button>
    </div>
  );
}

const levels = ['0', '-3', '-6', '-9', '-12', '-15', '-18', '-21', '-24', '-27', '-30', '-33', '-36', '-39', '-42', '-45', '-48', '-51', '-54', '-57', 'dB'];

function Meters() {
  return (
    <aside className="flex w-[56px] shrink-0 flex-col bg-[#232323] pl-2 pt-[13px]">
      <div className="flex h-[253px]">
        <div className="flex w-[30px] flex-col border border-[#101010] bg-[#1b1b1b]">
          <div className="flex h-1 divide-x divide-[#101010] border-b border-[#101010]"><span className="flex-1" /><span className="flex-1" /></div>
          <div className="mt-auto h-px bg-[#8a8a28]" />
        </div>
        <div className="flex flex-1 flex-col justify-between pl-px pt-[2px] font-['DejaVu_Sans',sans-serif] text-[5px] leading-[6px] text-[#8a8a8a]">
          {levels.map((l) => <span key={l} className="flex items-center gap-[2px]"><span className="h-px w-[2px] bg-[#666]" />{l}</span>)}
        </div>
      </div>
      <div className="mt-[2px] flex gap-[7px] pl-[3px] text-[5px] text-[#b4b4b4]">
        <button aria-label="Solo left" className="size-2 bg-[#2c2c2c] leading-[8px]">S</button>
        <button aria-label="Solo right" className="size-2 bg-[#2c2c2c] leading-[8px]">S</button>
      </div>
    </aside>
  );
}

export default function App() {
  return (
    <div className="flex min-h-screen flex-col overflow-hidden bg-[#151515] font-['Lato','Noto_Sans',sans-serif] text-[6px] leading-[8px]">
      <TitleBar />
      <MenuBar />
      <Header />
      <main className="flex flex-1 flex-col gap-[2px]">
        <div className="flex h-[183px] gap-[2px]">
          <EffectsPanel />
          <MixerPanel />
          <ProgramPanel />
        </div>
        <div className="flex flex-1 gap-px">
          <Tools />
          <Timeline />
          <Meters />
        </div>
      </main>
      <footer className="mt-px flex h-[11px] items-center bg-[#232323] pl-2 text-[#949494]">
        Click to select, or click in empty space and drag to marquee select. Use Shift, Alt, and Ctrl for other options.
      </footer>
      <div className="h-px bg-[#777] pl-6"><div className="h-full w-36 bg-white" /></div>
    </div>
  );
}
